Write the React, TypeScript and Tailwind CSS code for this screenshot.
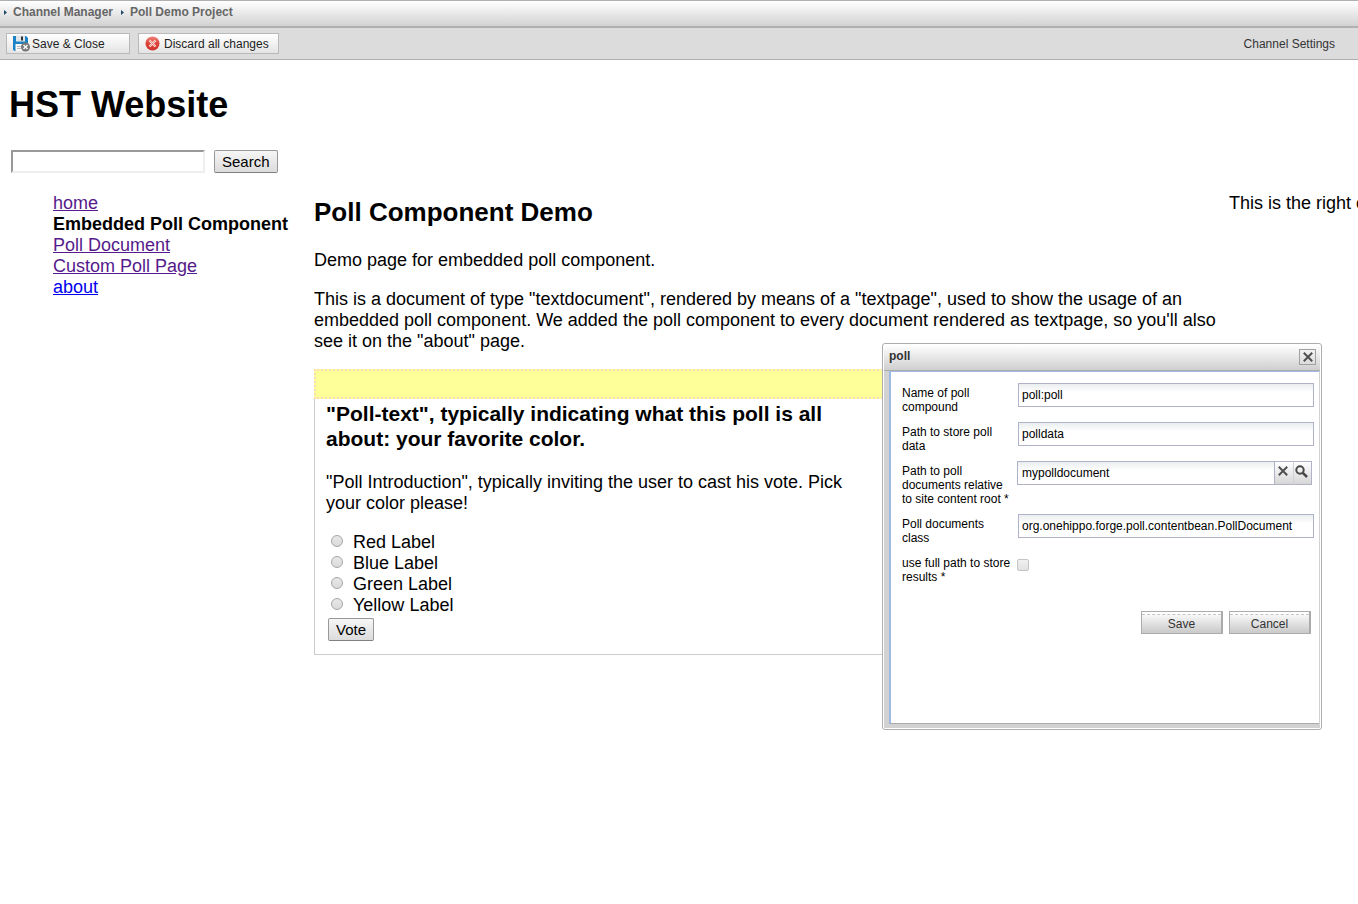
import type { ReactNode } from "react";

function Crumb({ children }: { children: ReactNode }) {
  return (
    <li className="flex items-center">
      <svg width="3" height="5" viewBox="0 0 3 5" className="mr-1.5" aria-hidden="true">
        <path d="M0 0 L3 2.5 L0 5 Z" fill="#1d4a6b" />
      </svg>
      <a href="#" className="hover:underline">{children}</a>
    </li>
  );
}

function SaveIcon() {
  return (
    <svg width="18" height="17" viewBox="0 0 18 17" aria-hidden="true">
      <path d="M0 1 H13 L15 3 V16 H1.500 L0 14.500 Z" fill="#1c84c6" />
      <rect x="3" y="0.500" width="9" height="6" fill="#dfe5e8" />
      <rect x="8" y="1.500" width="2" height="4" fill="#333" />
      <rect x="2.500" y="9" width="10" height="7" fill="#f7f7f7" />
      <path d="M4 11.500 H9 M4 13.500 H8" stroke="#b9b9b9" />
      <circle cx="12.500" cy="12" r="4.500" fill="#777" />
      <path d="M10.500 10 L14.500 14 M14.500 10 L10.500 14" stroke="#fff" strokeWidth="1.400" />
    </svg>
  );
}

function DiscardIcon() {
  return (
    <svg width="15" height="15" viewBox="0 0 15 15" aria-hidden="true">
      <defs>
        <linearGradient id="discard" x1="0" y1="0" x2="0" y2="1">
          <stop offset="0" stopColor="#ee8379" />
          <stop offset="0.500" stopColor="#dd4238" />
          <stop offset="1" stopColor="#cf332c" />
        </linearGradient>
      </defs>
      <circle cx="7.500" cy="7.500" r="7" fill="url(#discard)" />
      <path d="M4.500 4.500 L10.500 10.500 M10.500 4.500 L4.500 10.500" stroke="#fbe3e0" strokeWidth="2.200" />
      <path d="M4.800 4.800 L10.200 10.200 M10.200 4.800 L4.800 10.200" stroke="#e0675e" strokeWidth="0.700" />
    </svg>
  );
}

function CrossIcon() {
  return (
    <svg width="10" height="10" viewBox="0 0 10 10" aria-hidden="true">
      <path d="M0.800 0.800 L9.200 9.200 M9.200 0.800 L0.800 9.200" stroke="#505050" strokeWidth="2" />
    </svg>
  );
}

function SearchIcon() {
  return (
    <svg width="13" height="13" viewBox="0 0 13 13" aria-hidden="true">
      <circle cx="5" cy="5" r="3.700" fill="none" stroke="#484848" strokeWidth="2" />
      <path d="M7.800 7.800 L12 12" stroke="#484848" strokeWidth="2.600" />
    </svg>
  );
}

const toolButton =
  "flex h-[21px] items-center border border-[#b9b9b9] bg-linear-to-b from-white to-[#e4e4e4] text-[#222]";
const pageButton =
  "h-[23px] rounded-[2px] border border-[#989898] border-b-[#808080] bg-linear-to-b from-[#f6f6f6] to-[#dcdcdc] px-[7px] text-[15px] leading-5";
const field =
  "h-6 border border-[#b0b3c7] bg-linear-to-b from-[#e8eced] to-white to-40% bg-origin-border px-[3px] outline-none";

const navigation = [
  { text: "home", style: "text-[#551a8b] underline" },
  { text: "Embedded Poll Component", style: "font-bold" },
  { text: "Poll Document", style: "text-[#551a8b] underline" },
  { text: "Custom Poll Page", style: "text-[#551a8b] underline" },
  { text: "about", style: "text-[#0000ee] underline" },
];

const colors = ["Red", "Blue", "Green", "Yellow"];

function Row({ id, label, children }: { id: string; label: string; children: ReactNode }) {
  return (
    <div className="flex items-start">
      <label htmlFor={id} className="w-[115px] shrink-0 pt-[3px] pr-1">{label}</label>
      {children}
    </div>
  );
}

function DialogButton({ type, children }: { type: "submit" | "button"; children: ReactNode }) {
  return (
    <button
      type={type}
      className="flex h-[23px] w-[82px] flex-col border border-r-2 border-[#ababab] bg-linear-to-b from-white to-[#c9c9c9] text-[#333]"
    >
      <span className="h-[3px] w-full border-b border-dashed border-[#c4c4c4] bg-white" />
      <span className="w-full pt-0.5 text-center">{children}</span>
    </button>
  );
}

function PollDialog() {
  return (
    <section
      role="dialog"
      aria-labelledby="dialog-title"
      className="absolute top-[343px] right-9 w-[440px] rounded-[3px] border border-[#adadad] bg-white p-px font-['Liberation_Sans',sans-serif] text-xs leading-[14px]"
    >
      <header className="flex h-[26px] items-start justify-between border-b border-[#ababab] bg-linear-to-b from-white to-[#cfcfcf] pt-1 pr-1 pl-[5px]">
        <h2 id="dialog-title" className="font-bold text-[#333]">poll</h2>
        <button type="button" aria-label="Close" className="flex h-4 w-[17px] items-center justify-center border border-[#a0a0a0] bg-linear-to-b from-[#f2f2f2] to-[#dcdcdc]">
          <CrossIcon />
        </button>
      </header>
      <div className="border-r border-b-4 border-l-[5px] border-[#d2d2d2]">
        <form className="flex h-[353px] flex-col gap-2 border-t border-b border-l-2 border-t-[#a3b9e3] border-b-[#ababab] border-l-[#9cbbe4] pt-[11px] pl-[11px]">
          <Row id="compound" label="Name of poll compound">
            <input id="compound" defaultValue="poll:poll" className={`${field} ml-px w-[296px]`} />
          </Row>
          <Row id="store" label="Path to store poll data">
            <input id="store" defaultValue="polldata" className={`${field} ml-px w-[296px]`} />
          </Row>
          <Row id="documents" label="Path to poll documents relative to site content root *">
            <input id="documents" defaultValue="mypolldocument" className={`${field} w-[258px] pl-1`} />
            <button type="button" aria-label="Clear" className="flex h-6 w-[18px] items-center justify-center border-y border-[#b0b3c7] bg-linear-to-b from-white to-[#d6d6d6] pr-0.5 pb-1">
              <CrossIcon />
            </button>
            <button type="button" aria-label="Browse" className="flex h-6 w-[19px] items-center justify-center border border-[#b0b3c7] border-l-[#d0d0d8] bg-linear-to-b from-white to-[#d6d6d6] pr-0.5 pb-1">
              <SearchIcon />
            </button>
          </Row>
          <Row id="class" label="Poll documents class">
            <input id="class" defaultValue="org.onehippo.forge.poll.contentbean.PollDocument" className={`${field} ml-px w-[296px]`} />
          </Row>
          <Row id="full" label="use full path to store results *">
            <input id="full" type="checkbox" className="mt-1.5 size-3 appearance-none rounded-[2px] border border-[#c4c4c4] bg-linear-to-b from-[#f0f0f0] to-[#e2e2e2] checked:bg-[#777]" />
          </Row>
          <div className="mt-[19px] flex justify-end gap-1.5 pr-2">
            <DialogButton type="submit">Save</DialogButton>
            <DialogButton type="button">Cancel</DialogButton>
          </div>
        </form>
      </div>
    </section>
  );
}

export default function App() {
  return (
    <div className="relative min-h-screen overflow-x-hidden bg-white font-['Liberation_Sans',sans-serif] text-lg leading-[21px] text-black">
      <nav aria-label="Breadcrumb" className="h-7 border-t border-b-2 border-[#b0b0b0] bg-linear-to-b from-white to-[#d2d2d2] pt-1 pl-1 text-xs leading-[14px] font-bold text-[#666]">
        <ol className="flex gap-2">
          <Crumb>Channel Manager</Crumb>
          <Crumb>Poll Demo Project</Crumb>
        </ol>
      </nav>
      <div className="flex h-8 items-center gap-2 border-b border-[#aeaeae] bg-[#dcdcdc] pr-[23px] pl-1.5 text-xs leading-[14px]">
        <button type="button" className={`${toolButton} w-[124px] gap-px pl-[6px]`}>
          <SaveIcon />
          Save &amp; Close
        </button>
        <button type="button" className={`${toolButton} w-[141px] gap-1 pl-[6px]`}>
          <DiscardIcon />
          Discard all changes
        </button>
        <a href="#" className="ml-auto text-[#333]">Channel Settings</a>
      </div>

      <header className="px-[9px] pt-6">
        <h1 className="text-4xl leading-[42px] font-bold">HST Website</h1>
        <form role="search" className="mt-6 ml-0.5 flex gap-[9px]">
          <input
            type="search"
            aria-label="Search"
            className="h-[23px] w-[194px] appearance-none border-2 border-t-[#999] border-r-[#eee] border-b-[#eee] border-l-[#999] px-1 text-[15px] outline-none"
          />
          <button type="submit" className={pageButton}>Search</button>
        </form>
      </header>

      <div className="flex pt-5 pl-[53px]">
        <nav aria-label="Site" className="w-[261px] shrink-0">
          <ul>
            {navigation.map((item) => (
              <li key={item.text}>
                <a href="#" className={item.style}>{item.text}</a>
              </li>
            ))}
          </ul>
        </nav>
        <main className="min-w-0 flex-1 pt-1">
          <h2 className="text-[26px] leading-[30px] font-bold">Poll Component Demo</h2>
          <p className="mt-[23px]">Demo page for embedded poll component.</p>
          <p className="mt-[18px]">
            This is a document of type "textdocument", rendered by means of a "textpage", used to show the usage of an
            embedded poll component. We added the poll component to every document rendered as textpage, so you'll also
            see it on the "about" page.
          </p>
          <section className="mt-[17px] max-w-[580px] border border-[#ccc] border-t-0">
            <div className="-mx-px h-[30px] border-2 border-dotted border-[#fbdcb8] bg-[#ffff99]" />
            <form className="px-[11px] pt-0.5 pb-[13px]">
              <h3 className="text-[21px] leading-[25px] font-bold">
                "Poll-text", typically indicating what this poll is all about: your favorite color.
              </h3>
              <p className="mt-[21px]">
                "Poll Introduction", typically inviting the user to cast his vote. Pick your color please!
              </p>
              <div className="mt-[18px]">
                {colors.map((color) => (
                  <label key={color} className="flex">
                    <input
                      type="radio"
                      name="color"
                      value={color}
                      className="mt-[3px] mr-2.5 ml-[5px] size-3 appearance-none rounded-full border border-[#a6a6a6] bg-linear-to-b from-[#e8e8e8] to-[#dadada] checked:bg-[#666]"
                    />
                    {color} Label
                  </label>
                ))}
              </div>
              <button type="submit" className={`${pageButton} mt-0.5 ml-0.5 block`}>Vote</button>
            </form>
          </section>
        </main>
        <aside className="w-[129px] shrink-0 overflow-hidden whitespace-nowrap">This is the right column</aside>
      </div>

      <PollDialog />
    </div>
  );
}
